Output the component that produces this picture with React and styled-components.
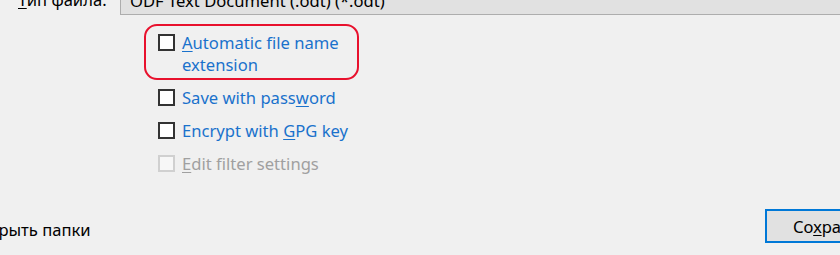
import React from "react";
import styled, { createGlobalStyle } from "styled-components";

const Global = createGlobalStyle`
  html, body { margin: 0; padding: 0; background: #f0f0f0; overflow: hidden; }
  body { font-family: "Noto Sans", "Open Sans", "Liberation Sans", sans-serif; }
`;

const Page = styled.div`
  width: 840px;
  height: 255px;
  overflow: hidden;
  display: flex;
  flex-direction: column;
  background: #f0f0f0;
  font-size: 16.6px;
  color: #000;
`;

const TypeRow = styled.div`
  display: flex;
  align-items: center;
  height: 30px;
  margin-top: -15px;
  flex-shrink: 0;
`;

const FieldLabel = styled.span`
  width: 120px;
  padding-left: 18px;
  box-sizing: border-box;
  line-height: 22px;
  white-space: nowrap;
  overflow: hidden;
`;

const Combo = styled.div`
  flex: 1;
  height: 30px;
  box-sizing: border-box;
  background: #e1e1e1;
  border: 1px solid #adadad;
  border-right: none;
  padding-left: 9px;
  display: flex;
  align-items: center;
  white-space: nowrap;
`;

const Options = styled.div`
  display: flex;
  flex-direction: column;
  gap: 11px;
  margin-top: 17px;
  margin-left: 158px;
`;

const Option = styled.label`
  position: relative;
  display: flex;
  align-items: flex-start;
  gap: 7px;
  line-height: 22px;
  color: ${(p) => (p.$disabled ? "#a0a0a0" : "#1a72cc")};
`;

const Box = styled.span`
  width: 17px;
  height: 17px;
  margin-top: 2px;
  box-sizing: border-box;
  flex-shrink: 0;
  background: ${(p) => (p.$disabled ? "#f7f7f7" : "#ffffff")};
  border: 2px solid ${(p) => (p.$disabled ? "#d0d0d0" : "#333333")};
`;

const Highlight = styled.span`
  position: absolute;
  top: -8px;
  left: -14px;
  bottom: -4px;
  width: 215px;
  box-sizing: border-box;
  border: 2px solid #e8112d;
  border-radius: 13px;
  pointer-events: none;
`;

const Key = styled.u`
  text-decoration-thickness: 1px;
  text-underline-offset: 2px;
`;

const Footer = styled.div`
  margin-top: auto;
  display: flex;
  align-items: flex-end;
  justify-content: space-between;
  padding-bottom: 12px;
`;

const FolderToggle = styled.span`
  margin-left: -21px;
  margin-bottom: 2px;
  line-height: 22px;
  white-space: nowrap;
`;

const SaveButton = styled.button`
  margin-left: auto;
  margin-right: -60px;
  width: 135px;
  height: 34px;
  box-sizing: border-box;
  background: #e1e1e1;
  border: 2px solid #0078d7;
  font: inherit;
  color: #000;
  text-align: left;
  padding: 0 0 0 26px;
  white-space: nowrap;
`;

export default function App() {
  return (
    <>
      <Global />
      <Page>
        <TypeRow>
          <FieldLabel>
            <Key>Т</Key>ип файла:
          </FieldLabel>
          <Combo>ODF Text Document (.odt) (*.odt)</Combo>
        </TypeRow>
        <Options>
          <Option>
            <Highlight />
            <Box />
            <span>
              <Key>A</Key>utomatic file name
              <br />
              extension
            </span>
          </Option>
          <Option>
            <Box />
            <span>
              Save with pass<Key>w</Key>ord
            </span>
          </Option>
          <Option>
            <Box />
            <span>
              Encrypt with <Key>G</Key>PG key
            </span>
          </Option>
          <Option $disabled>
            <Box $disabled />
            <span>
              <Key>E</Key>dit filter settings
            </span>
          </Option>
        </Options>
        <Footer>
          <FolderToggle>Скрыть папки</FolderToggle>
          <SaveButton>
            Со<Key>х</Key>ранить
          </SaveButton>
        </Footer>
      </Page>
    </>
  );
}
